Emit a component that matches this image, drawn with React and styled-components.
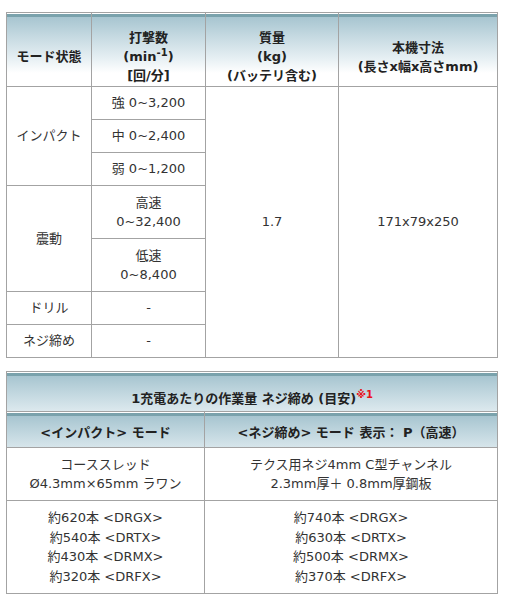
import styled, { createGlobalStyle } from 'styled-components';

const GlobalStyle = createGlobalStyle`
  body {
    margin: 0;
    background: #fff;
    font-family: 'DejaVu Sans', 'Noto Sans CJK JP', sans-serif;
    font-size: 13px;
    color: #333;
  }
`;

const Page = styled.div`
  padding: 12px 0 0 6px;
  display: flex;
  flex-direction: column;
  gap: 13px;
`;

const Table = styled.table`
  width: ${(p) => p.$width}px;
  border-collapse: collapse;
  table-layout: fixed;
  border: 1px solid #a3a3a3;

  td,
  th {
    padding: 0 4px;
    border: 1px solid #a3a3a3;
    text-align: center;
    vertical-align: middle;
    line-height: 19.5px;
  }
`;

const Head = styled.th`
  && {
    padding-top: ${(p) => p.$pt || 5}px;
    line-height: 19px;
  }
  background: #fff
    linear-gradient(
      to bottom,
      #fff 0,
      #fff 1px,
      #7aa2ac 1px,
      #7aa2ac 4px,
      #a7c5d0 4px,
      #c3d8e0 22px,
      #e4eef2 44px,
      #fff 60px
    )
    no-repeat;
  background-size: 100% 60px;
  font-weight: bold;
  color: #222;
`;

const Row = styled.tr`
  height: ${(p) => p.$h}px;
`;

const Sup = styled.sup`
  font-size: 10px;
  line-height: 0;
  vertical-align: 5px;
`;

const Note = styled.span`
  color: #e8141c;
  font-size: 10px;
  vertical-align: 5px;
  line-height: 0;
`;

const Line = styled.div``;

const specRows = [
  ['インパクト', ['強 0~3,200'], 3],
  [null, ['中 0~2,400']],
  [null, ['弱 0~1,200']],
  ['震動', ['高速', '0~32,400'], 2],
  [null, ['低速', '0~8,400']],
  ['ドリル', ['-'], 1],
  ['ネジ締め', ['-'], 1],
];

const specHeights = [33, 33, 33, 53, 53, 33, 33];

const impact = ['約620本 <DRGX>', '約540本 <DRTX>', '約430本 <DRMX>', '約320本 <DRFX>'];
const screw = ['約740本 <DRGX>', '約630本 <DRTX>', '約500本 <DRMX>', '約370本 <DRFX>'];

const SpecTable = () => (
  <Table $width={491}>
    <colgroup>
      <col style={{ width: 85 }} />
      <col style={{ width: 114 }} />
      <col style={{ width: 133 }} />
      <col style={{ width: 159 }} />
    </colgroup>
    <tbody>
      <Row $h={74}>
        <Head $pt={14}>モード状態</Head>
        <Head $pt={14}>
          打撃数
          <br />
          (min<Sup>-1</Sup>)
          <br />
          [回/分]
        </Head>
        <Head $pt={14}>
          質量
          <br />
          (kg)
          <br />
          (バッテリ含む)
        </Head>
        <Head $pt={14}>
          本機寸法
          <br />
          (長さx幅x高さmm)
        </Head>
      </Row>
      {specRows.map(([mode, value, span], i) => (
        <Row key={i} $h={specHeights[i]}>
          {mode && <td rowSpan={span}>{mode}</td>}
          <td>
            {value.map((v) => (
              <Line key={v}>{v}</Line>
            ))}
          </td>
          {i === 0 && (
            <>
              <td rowSpan={7}>1.7</td>
              <td rowSpan={7}>171x79x250</td>
            </>
          )}
        </Row>
      ))}
    </tbody>
  </Table>
);

const WorkTable = () => (
  <Table $width={491}>
    <colgroup>
      <col style={{ width: 198 }} />
      <col style={{ width: 293 }} />
    </colgroup>
    <tbody>
      <Row $h={40}>
        <Head colSpan={2} $pt={14}>
          1充電あたりの作業量 ネジ締め (目安)<Note>※1</Note>
        </Head>
      </Row>
      <Row $h={36}>
        <Head>&lt;インパクト&gt; モード</Head>
        <Head>&lt;ネジ締め&gt; モード 表示： P（高速）</Head>
      </Row>
      <Row $h={53}>
        <td>
          <Line>コーススレッド</Line>
          <Line>Ø4.3mm×65mm ラワン</Line>
        </td>
        <td>
          <Line>テクス用ネジ4mm C型チャンネル</Line>
          <Line>2.3mm厚＋ 0.8mm厚鋼板</Line>
        </td>
      </Row>
      <Row $h={93}>
        <td>
          {impact.map((t) => (
            <Line key={t}>{t}</Line>
          ))}
        </td>
        <td>
          {screw.map((t) => (
            <Line key={t}>{t}</Line>
          ))}
        </td>
      </Row>
    </tbody>
  </Table>
);

export default function App() {
  return (
    <>
      <GlobalStyle />
      <Page>
        <SpecTable />
        <WorkTable />
      </Page>
    </>
  );
}
